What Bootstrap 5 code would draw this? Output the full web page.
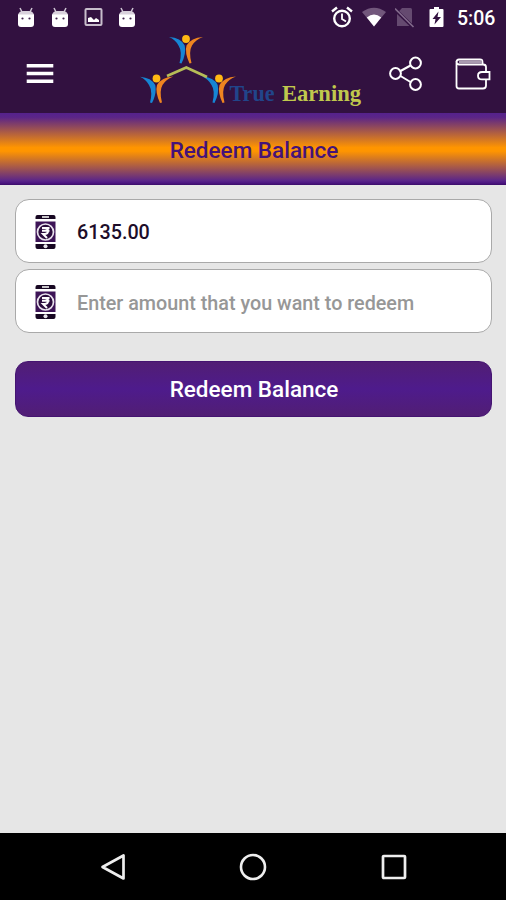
<!DOCTYPE html>
<html lang="en">
<head>
<meta charset="utf-8">
<meta name="viewport" content="width=device-width, initial-scale=1">
<title>Redeem Balance</title>
<link href="https://cdn.jsdelivr.net/npm/bootstrap@5.3.0/dist/css/bootstrap.min.css" rel="stylesheet">
<style>
  body { font-family: Roboto, "Liberation Sans", sans-serif; font-weight: 500; background: #e6e6e6; }
  svg { display: block; flex: none; }
  .app-top { background: #321140; height: 113px; }
  .status-row { height: 34px; padding: 0 11px 0 16px; }
  .status-left { gap: 14px; padding-bottom: 1px; }
  .clock { font-size: 19.5px; line-height: 32px; width: 38px; padding-top: 4px; margin-left: 13px; white-space: nowrap; }
  .battery { margin-left: 14px; }
  .tool-row { height: 79px; padding: 0 14px 0 26px; }
  .brand { margin-left: 86px; }
  .wallet { margin-left: 30px; }
  .title-strip { height: 72px; font-size: 22.5px; padding: 3px 0 0 2px; color: #451379;
    background: linear-gradient(#55228c 0, #5b2587 6%, #ff9500 48%, #ff9500 53%, #5a2589 94%, #4c1682 97%, #3b0c69 100%); }
  .form-area { padding: 14px 14px 0 15px; }
  .field-box { height: 64px; border: 1px solid #a9a9a9; border-radius: 14px; padding: 1px 19px 0; gap: 21px; font-size: 19.75px; color: #1d0d29; }
  .field-box + .field-box { margin-top: 6px; }
  .field-box span { line-height: 24px; padding-top: 2px; }
  .amount-input, .amount-input:focus { font-size: 19.75px; font-weight: 500; color: #1d0d29; background: transparent; box-shadow: none; line-height: 24px; }
  .amount-input::placeholder { color: #979797; opacity: 1; }
  .redeem-btn, .redeem-btn:hover { height: 56px; margin-top: 28px; padding: 2px 0 0 1px; border-radius: 13px; border: 1px solid #451471; color: #fff; font-size: 22.5px; font-weight: 500;
    background: linear-gradient(#511e74, #4e1b8c 50%, #511e74); }
  .system-nav { height: 67px; background: #000; }
  .home-key { margin: 0 114px 0 113px; }
</style>
</head>
<body class="vh-100 d-flex flex-column overflow-hidden">
<svg width="0" height="0" class="position-absolute" aria-hidden="true">
  <symbol id="droid" viewBox="0 0 20 22">
    <path d="M4 2l2 4M16 2l-2 4" stroke="#cfc6d3" stroke-width="1.5"/>
    <path d="M2 9q1-4 5-4h6q4 0 5 4z" fill="#d9d1dc"/>
    <path d="M2 8.500h16V18q0 3-3 3H5q-3 0-3-3z" fill="#fff"/>
    <circle cx="6.500" cy="12.500" r="1.100" fill="#41224d"/><circle cx="13.500" cy="12.500" r="1.100" fill="#41224d"/>
  </symbol>
  <symbol id="person" viewBox="0 0 34 30">
    <path d="M0 2.600Q12 3.500 15.700 11Q17.500 19 12.500 29L10.500 28.500Q13.500 17 9.500 11Q6.500 5.500 0 2.600Z" fill="#1685d4"/>
    <path d="M34 2.600Q22 3.500 17.500 11Q15.500 18 20.500 29L22.500 28.500Q19.500 17 23 11Q26.500 5.500 34 2.600Z" fill="#ee8420"/>
    <circle cx="17" cy="4.500" r="3.900" fill="#ffb813"/>
  </symbol>
  <symbol id="phone-rupee" viewBox="0 0 20 36">
    <path d="M0 5V3q0-2 2-2h16q2 0 2 2v2z M0 30h20v3q0 2-2 2H2q-2 0-2-2z" fill="#180823"/>
    <path d="M0 7.500h20v20.500H0z" fill="#3d1457"/>
    <path d="M6.500 3h7" stroke="#ddd" stroke-width="1.800"/>
    <circle cx="10" cy="32.300" r="2" fill="#e8e4eb"/>
    <circle cx="10" cy="18" r="8" fill="#2a0c3c" stroke="#e9e2ed" stroke-width="1.700"/>
    <path d="M6.500 14h7.500M6.500 16.700h7.500M7 14h2q3.500 0 3.500 3t-3.500 3H7.500l4 4" fill="none" stroke="#fff" stroke-width="2"/>
  </symbol>
</svg>

<header class="app-top flex-shrink-0 text-white">
  <div class="status-row d-flex align-items-center justify-content-between">
    <div class="status-left d-flex align-items-center">
      <svg width="20" height="22"><use href="#droid"/></svg>
      <svg width="20" height="22"><use href="#droid"/></svg>
      <svg width="19" height="20" viewBox="0 0 19 20"><rect x="1.500" y="2" width="16" height="16" rx="1" fill="none" stroke="#c7bdcb" stroke-width="2"/><path d="M4 15v-4l3-1 3 3 2-2 3 2v2z" fill="#fff"/></svg>
      <svg width="20" height="22"><use href="#droid"/></svg>
    </div>
    <div class="d-flex align-items-center">
      <svg width="22" height="22" viewBox="0 0 22 22" fill="none" stroke="#fff"><circle cx="11" cy="12.500" r="7.800" stroke-width="2.400"/><path d="M1 5.500L6 1.500M21 5.500L16 1.500" stroke-width="2.400"/><path d="M11 7.500V13l4 2.500" stroke-width="1.800"/></svg>
      <svg class="ms-2" width="26" height="20" viewBox="0 0 26 20"><path d="M1 5Q13-3.500 25 5L13 19.500z" fill="#72577c"/><path d="M5.800 10.500Q13 4.500 20.200 10.500L13 19.500z" fill="#fff"/></svg>
      <svg class="ms-2" width="20" height="21" viewBox="0 0 20 21"><path d="M7 1h8.500q1.500 0 1.500 1.500V19H2V6.500z" fill="#654a70"/><path d="M0 2.500L18 20" stroke="#321140" stroke-width="3.500"/><path d="M0 1.500L18.500 20" stroke="#836b8c" stroke-width="1.600"/></svg>
      <svg class="battery" width="15" height="22" viewBox="0 0 15 22"><path d="M5 1h5v2h3.500q1 0 1 1v16q0 1-1 1h-12q-1 0-1-1V4q0-1 1-1H5z" fill="#fff"/><path d="M9.500 5.500L3.500 13h3L5.500 18.500 12 11H8.500z" fill="#321140"/></svg>
      <div class="clock">5:06</div>
    </div>
  </div>
  <div class="tool-row d-flex align-items-center">
    <svg width="28" height="22" viewBox="0 0 28 22" role="img" aria-label="Menu"><path d="M.7 2.700h26.600M.7 10.500h26.600M.7 18.300h26.600" stroke="#fff" stroke-width="3.600"/></svg>
    <svg class="brand" width="226" height="79" viewBox="140 34 226 79" role="img" aria-label="True Earning">
      <use href="#person" x="169" y="34.500" width="34" height="30"/>
      <use href="#person" x="139.500" y="74" width="34" height="30"/>
      <use href="#person" x="202" y="74" width="34" height="30"/>
      <path d="M167 76L186.300 67.500L207 77" fill="none" stroke="#b6bd57" stroke-width="2.800"/>
      <g font-family="Liberation Serif, serif" font-weight="700" font-size="23">
        <text x="229.500" y="101" fill="#21458a" textLength="45" lengthAdjust="spacingAndGlyphs">True</text>
        <text x="282" y="101" fill="#c0c84d" textLength="79" lengthAdjust="spacingAndGlyphs">Earning</text>
      </g>
    </svg>
    <svg class="ms-auto" width="36" height="36" viewBox="0 0 36 36" fill="none" stroke="#fff" stroke-width="2"><circle cx="6.500" cy="17.500" r="5.400"/><circle cx="26.500" cy="7" r="5.400"/><circle cx="26.500" cy="28.500" r="5.400"/><path d="M11.500 15l10-5.500M11.500 20l10 6"/></svg>
    <svg class="wallet" width="37" height="32" viewBox="0 0 37 32" fill="none" stroke="#fff" stroke-width="1.800"><path d="M31 14V9q0-2.500-3-2.500H4Q1.500 6 1.500 3.500V28q0 2.500 2.500 2.500h24q3 0 3-3V21"/><path d="M1.500 4Q1.500 1.500 4 1.500h21q2.500 0 2.500 2.500v2.500"/><path d="M4 4h23" stroke="#a99bb0" stroke-width="3"/><path d="M34.500 14H27q-4 0-4 3.700t4 3.700h7.500z"/></svg>
  </div>
</header>

<div class="title-strip flex-shrink-0 d-flex align-items-center justify-content-center">Redeem Balance</div>

<main class="form-area flex-grow-1">
  <div class="field-box bg-white d-flex align-items-center">
    <svg width="21" height="36"><use href="#phone-rupee"/></svg>
    <span>6135.00</span>
  </div>
  <div class="field-box bg-white d-flex align-items-center">
    <svg width="21" height="36"><use href="#phone-rupee"/></svg>
    <input class="amount-input form-control border-0 px-0 pb-0 pt-1" type="text" placeholder="Enter amount that you want to redeem" aria-label="Amount">
  </div>
  <button class="redeem-btn btn w-100 d-flex align-items-center justify-content-center" type="button">Redeem Balance</button>
</main>

<nav class="system-nav flex-shrink-0 d-flex align-items-center justify-content-center">
  <svg width="26" height="28" viewBox="0 0 26 28"><path d="M23.500 2.500v23L2.500 14z" fill="none" stroke="#eee" stroke-width="2.700" stroke-linejoin="round"/></svg>
  <svg class="home-key" width="28" height="28" viewBox="0 0 28 28"><circle cx="14" cy="14" r="12" fill="none" stroke="#eee" stroke-width="2.600"/></svg>
  <svg width="26" height="26" viewBox="0 0 26 26"><rect x="2" y="2" width="22" height="22" rx=".8" fill="none" stroke="#eee" stroke-width="2.700"/></svg>
</nav>
<script src="https://cdn.jsdelivr.net/npm/bootstrap@5.3.0/dist/js/bootstrap.bundle.min.js"></script>
</body>
</html>
